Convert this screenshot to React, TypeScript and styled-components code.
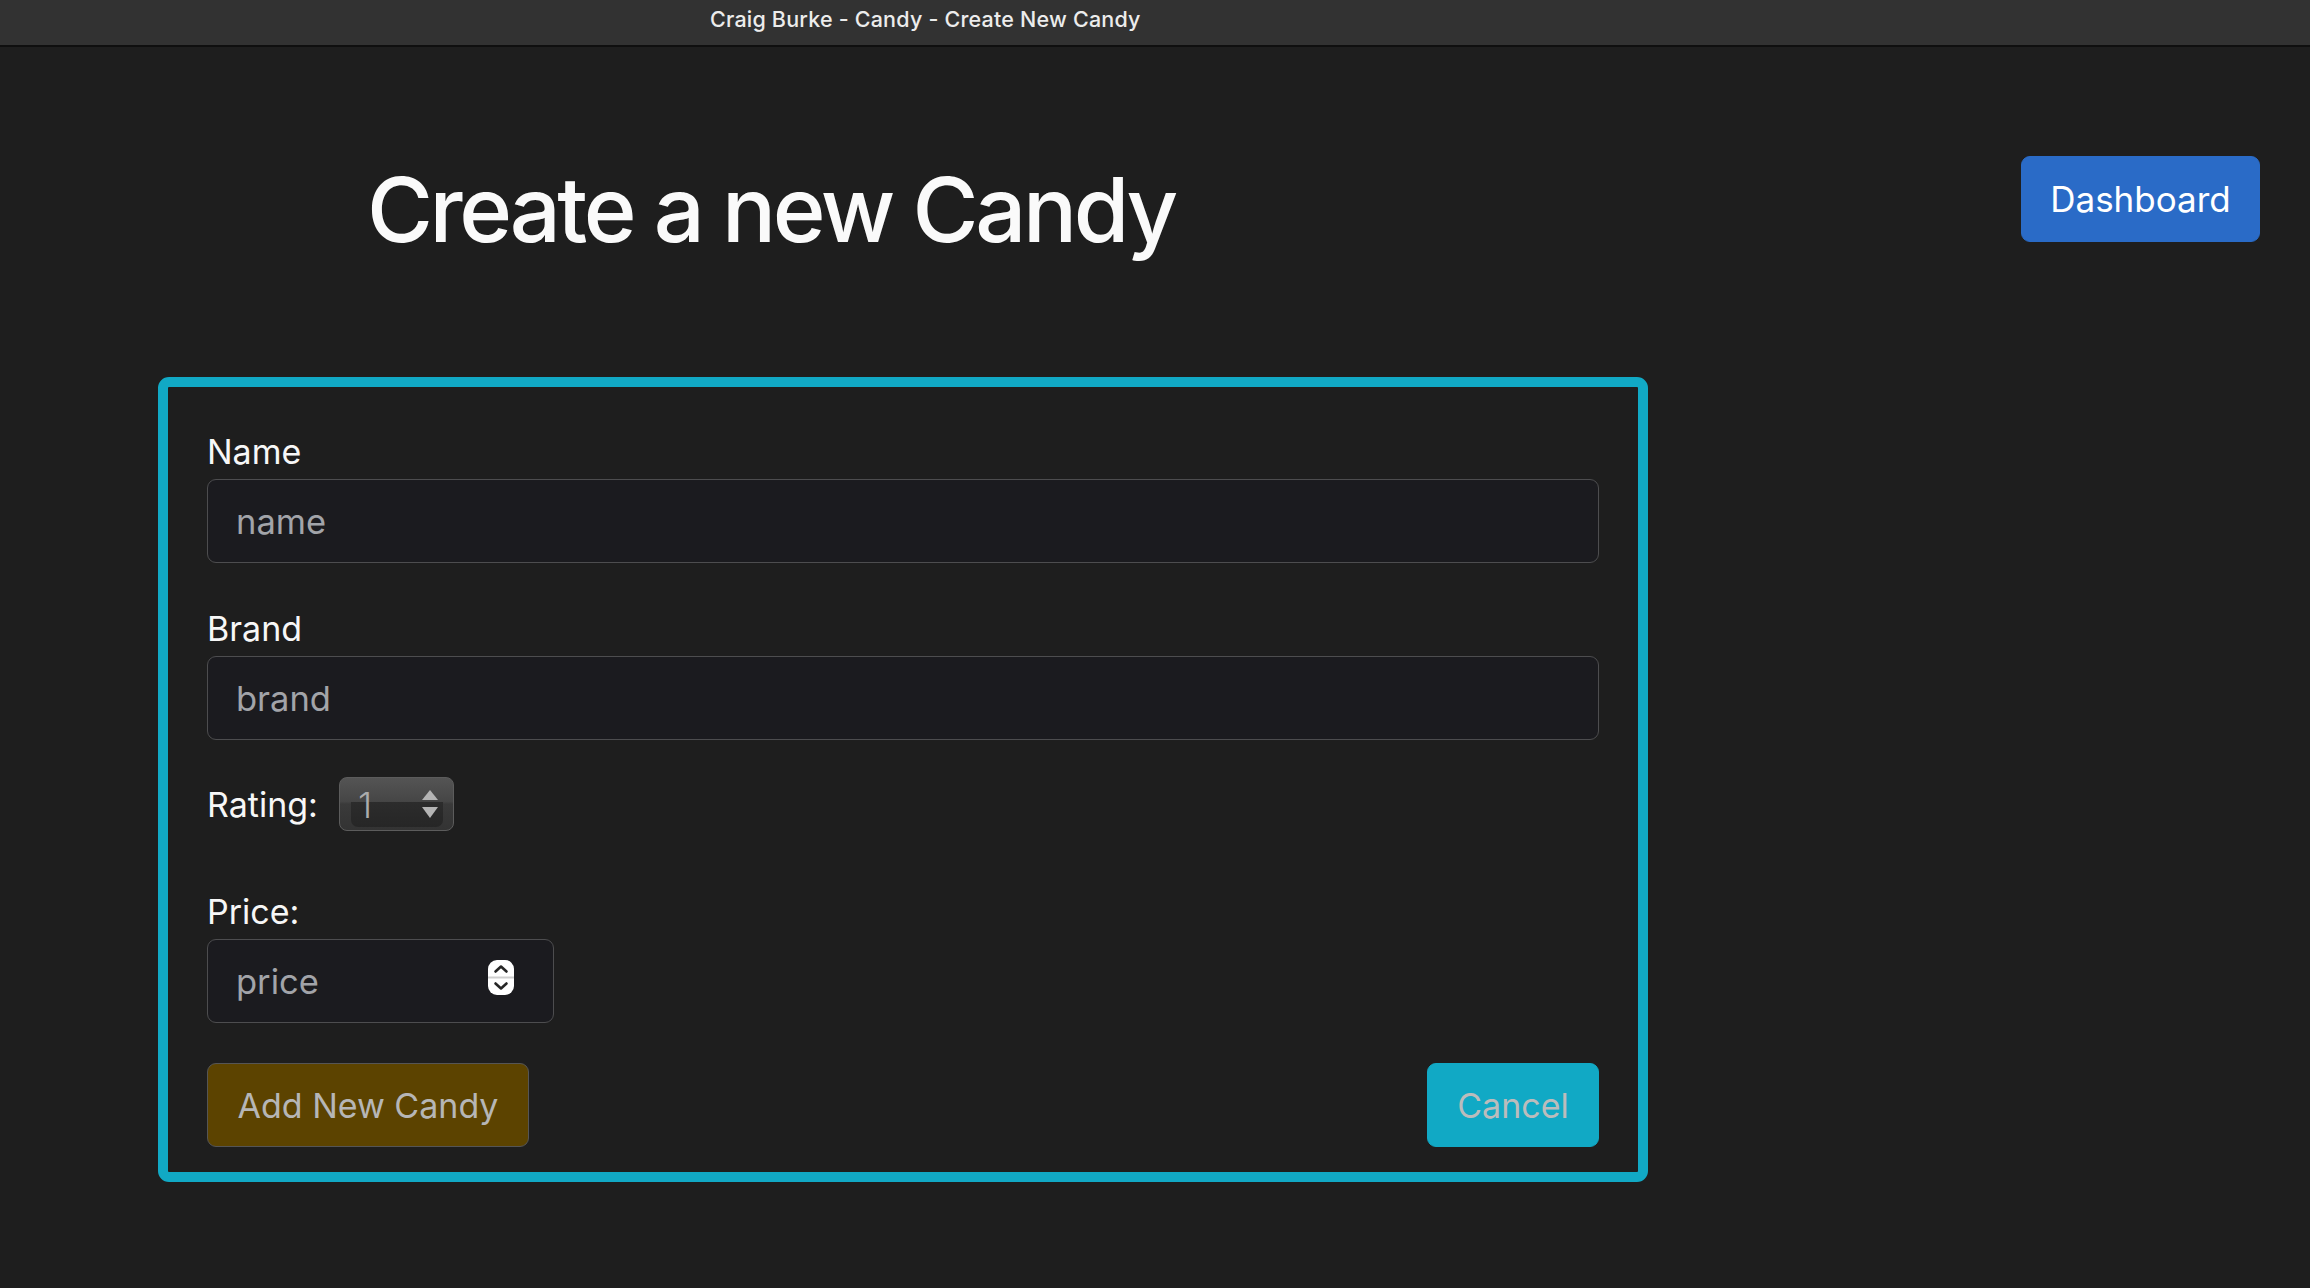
import React from "react";
import styled, { createGlobalStyle } from "styled-components";

const Global = createGlobalStyle`
  html, body { margin: 0; padding: 0; background: #1e1e1e; }
  body { font-family: Inter, "Noto Sans", "Liberation Sans", sans-serif; color: #f5f5f5; }
  * { box-sizing: border-box; }
`;

const Page = styled.div`
  min-height: 1288px;
  background: #1e1e1e;
`;

const TitleBar = styled.div`
  height: 47px;
  background: #323232;
  border-bottom: 2px solid #0f0f0f;
  display: flex;
  align-items: center;
  padding: 0 0 8px 710px;
  font-size: 21.5px;
  font-weight: 500;
  color: #ececec;
  letter-spacing: 0.2px;
`;

const Header = styled.div`
  display: flex;
  justify-content: space-between;
  align-items: flex-start;
  margin-top: 109px;
  padding: 0 50px 0 367px;
`;

const Heading = styled.h1`
  margin: 1px 0 0 0;
  font-size: 90px;
  line-height: 106px;
  font-weight: 500;
  color: #fafafa;
  letter-spacing: -3.4px;
`;

const Button = styled.button<{ $bg: string; $fg: string; $border?: string; $w: number }>`
  height: 84px;
  width: ${(p) => p.$w}px;
  padding: 0;
  border-radius: 9px;
  border: 1px solid ${(p) => p.$border || p.$bg};
  background: ${(p) => p.$bg};
  color: ${(p) => p.$fg};
  font-family: Inter, "Noto Sans", sans-serif;
  font-size: 34px;
  font-weight: 400;
  display: flex;
  align-items: center;
  justify-content: center;
  cursor: pointer;
`;

const DashButton = styled(Button)`
  height: 86px;
  font-size: 35px;
`;

const Card = styled.form`
  margin: 114px 0 0 158px;
  width: 1490px;
  border: 10px solid #11a9c5;
  border-radius: 11px;
  padding: 39px 39px 25px 39px;
  display: flex;
  flex-direction: column;
`;

const Label = styled.label`
  display: block;
  font-size: 34px;
  line-height: 51px;
  color: #f7f7f7;
  margin-bottom: 2px;
`;

const Input = styled.input`
  width: 100%;
  height: 84px;
  background: #1b1b1f;
  border: 1.5px solid #4d4d4f;
  border-radius: 9px;
  padding: 0 28px;
  font-family: Inter, "Noto Sans", sans-serif;
  font-size: 34.5px;
  color: #e6e6e6;
  outline: none;
  &::placeholder { color: #a2a4a9; }
`;

const Group = styled.div<{ $mb: number }>`
  margin-bottom: ${(p) => p.$mb}px;
`;

const RatingRow = styled.div`
  display: flex;
  align-items: center;
  height: 54px;
  margin-bottom: 55px;
  gap: 21px;
`;

const RatingLabel = styled.span`
  font-size: 34px;
  line-height: 51px;
  color: #f7f7f7;
`;

const Select = styled.div`
  position: relative;
  width: 115px;
  height: 54px;
  border: 1.5px solid #5c5c5c;
  border-radius: 8px;
  background: linear-gradient(#545454 0%, #464646 45%, #3a3a3a 50%, #333 100%);
  display: flex;
  align-items: center;
  padding-left: 18px;
  overflow: hidden;
  &::before {
    content: "";
    position: absolute;
    left: 11px;
    right: 10px;
    top: 24px;
    bottom: 3px;
    background: linear-gradient(#2c2c2c, #262626);
    border-radius: 0 0 7px 7px;
  }
`;

const SelectValue = styled.span`
  position: relative;
  font-size: 36px;
  font-weight: 300;
  color: #acacac;
  line-height: 1;
  margin-top: 2px;
`;

const Arrows = styled.svg`
  position: absolute;
  right: 14px;
  top: 11px;
`;

const PriceBox = styled.div`
  width: 347px;
  height: 84px;
  background: #1b1b1f;
  border: 1.5px solid #4d4d4f;
  border-radius: 9px;
  display: flex;
  align-items: center;
  padding: 0 39px 0 28px;
`;

const PriceInput = styled.input`
  flex: 1;
  min-width: 0;
  background: transparent;
  border: none;
  outline: none;
  font-family: Inter, "Noto Sans", sans-serif;
  font-size: 34.5px;
  color: #e6e6e6;
  padding: 0;
  &::placeholder { color: #a2a4a9; }
`;

const Spinner = styled.svg`
  flex: none;
  margin-top: -8px;
`;

const ButtonRow = styled.div`
  display: flex;
  justify-content: space-between;
`;

export default function App() {
  return (
    <Page>
      <Global />
      <TitleBar>Craig Burke - Candy - Create New Candy</TitleBar>
      <Header>
        <Heading>Create a new Candy</Heading>
        <DashButton type="button" $bg="#2a6bc7" $fg="#ffffff" $w={239}>
          Dashboard
        </DashButton>
      </Header>
      <Card onSubmit={(e) => e.preventDefault()}>
        <Group $mb={40}>
          <Label>Name</Label>
          <Input placeholder="name" />
        </Group>
        <Group $mb={37}>
          <Label>Brand</Label>
          <Input placeholder="brand" />
        </Group>
        <RatingRow>
          <RatingLabel>Rating:</RatingLabel>
          <Select>
            <SelectValue>1</SelectValue>
            <Arrows width="18" height="32" viewBox="0 0 18 32">
              <polygon points="9,1 17,11 1,11" fill="#b4b4b4" />
              <polygon points="1,18 17,18 9,29" fill="#b4b4b4" />
            </Arrows>
          </Select>
        </RatingRow>
        <Group $mb={40}>
          <Label>Price:</Label>
          <PriceBox>
            <PriceInput placeholder="price" type="text" />
            <Spinner width="26" height="35" viewBox="0 0 26 35">
              <rect x="0" y="0" width="26" height="35" rx="9" fill="#ffffff" />
              <line x1="0" y1="17.5" x2="26" y2="17.5" stroke="#cfcfcf" strokeWidth="2" />
              <polyline points="7.5,11.5 13,6.5 18.5,11.5" fill="none" stroke="#262626" strokeWidth="2.6" strokeLinecap="round" strokeLinejoin="round" />
              <polyline points="7.5,23.5 13,28.5 18.5,23.5" fill="none" stroke="#262626" strokeWidth="2.6" strokeLinecap="round" strokeLinejoin="round" />
            </Spinner>
          </PriceBox>
        </Group>
        <ButtonRow>
          <Button type="submit" $bg="#5c4300" $fg="#b6b6b6" $border="#555555" $w={322}>
            Add New Candy
          </Button>
          <Button type="button" $bg="#11a9c5" $fg="#bcbcbc" $w={172}>
            Cancel
          </Button>
        </ButtonRow>
      </Card>
    </Page>
  );
}
